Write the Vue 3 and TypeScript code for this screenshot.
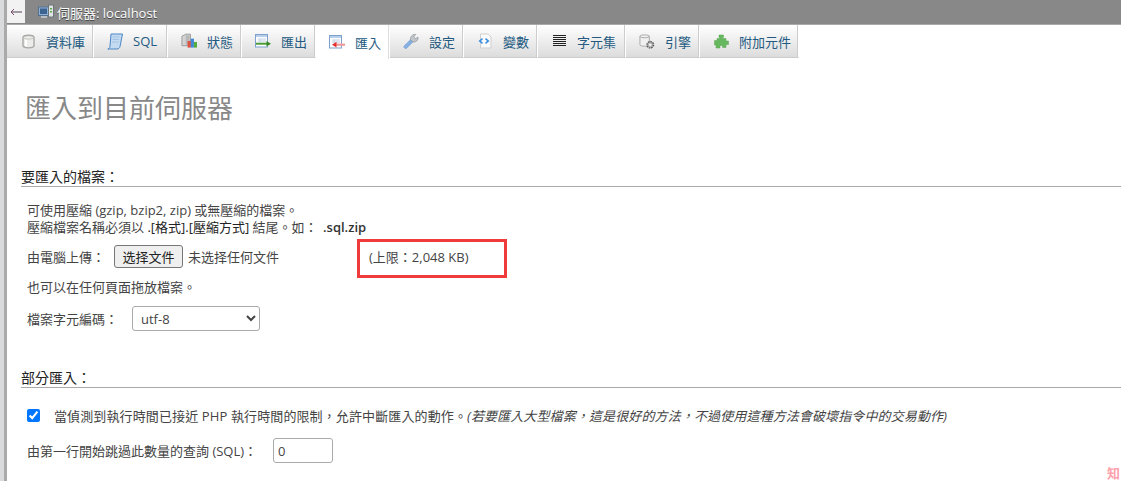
<script setup lang="ts">
const tabs: { key: string; label: string; active?: boolean }[] = [
  { key: 'db', label: '資料庫' },
  { key: 'sql', label: 'SQL' },
  { key: 'status', label: '狀態' },
  { key: 'export', label: '匯出' },
  { key: 'import', label: '匯入', active: true },
  { key: 'settings', label: '設定' },
  { key: 'vars', label: '變數' },
  { key: 'charset', label: '字元集' },
  { key: 'engine', label: '引擎' },
  { key: 'plugin', label: '附加元件' },
]
</script>

<template>
  <div class="page">
    <div class="rail"></div>
    <div class="main">
      <header class="topbar">
        <button class="back" type="button" aria-label="back">
          <svg width="12" height="8" viewBox="0 0 12 8">
            <path d="M12 4H1.5" stroke="#4f444f" fill="none" />
            <path d="M4 1L1 4L4 7" stroke="#7a4a6a" fill="none" />
          </svg>
        </button>
        <svg class="srv" width="16" height="16" viewBox="0 0 16 16">
          <rect x="0.5" y="3" width="10" height="8.5" fill="#8fb0d6" stroke="#55708f" />
          <rect x="2" y="4.5" width="7" height="5.5" fill="#3c6390" />
          <rect x="10.5" y="1" width="5" height="12" fill="#dfe3e6" stroke="#6c7478" />
          <rect x="12" y="4" width="2" height="1.5" fill="#5cae4a" />
          <rect x="12" y="7" width="2" height="1.5" fill="#5cae4a" />
          <rect x="3" y="12" width="6" height="2" fill="#b8bec4" />
        </svg>
        <span class="crumb">伺服器: localhost</span>
      </header>

      <nav class="tabs">
        <a v-for="t in tabs" :key="t.key" class="tab" :class="{ active: t.active }">
          <span class="ico">
            <svg v-if="t.key === 'db'" width="13" height="15" viewBox="0 0 13 15">
              <path d="M1 3.5C1 .4 12 .4 12 3.5V11.5C12 14.6 1 14.6 1 11.5Z" fill="#ececea" stroke="#a8a8a4" stroke-width="1.4" />
              <path d="M1.5 3.5C2 5.6 11 5.6 11.5 3.5" fill="none" stroke="#c4c4c0" />
              <rect x="3" y="6" width="2" height="6.5" fill="#fff" />
            </svg>
            <svg v-else-if="t.key === 'sql'" width="16" height="17" viewBox="0 0 16 17">
              <path d="M4 1H15.5L13 13.5C12.7 15 11.5 16 10 16H.8C2.6 15.5 3 14 3 13Z" fill="#c4daf1" stroke="#4a86c4" />
              <path d="M5.5 4H12.5M5.5 6.5H12M5 9H11.5" stroke="#a3c4e6" fill="none" />
            </svg>
            <svg v-else-if="t.key === 'status'" width="17" height="16" viewBox="0 0 17 16">
              <path d="M1 3L5 .8H10V13H1Z" fill="#d4d4d4" stroke="#979797" />
              <rect x="5" y="2" width="4" height="10" fill="#b8b8b8" />
              <rect x="7" y="8" width="3.4" height="7" fill="#dc5140" />
              <rect x="10.4" y="5.5" width="3.3" height="9.5" fill="#3f86d6" />
              <rect x="13.7" y="9" width="3.3" height="6" fill="#55ad40" />
            </svg>
            <svg v-else-if="t.key === 'export'" width="16" height="14" viewBox="0 0 16 14">
              <rect x="0.5" y="0.5" width="12" height="12.5" fill="#fdfdfd" stroke="#7da0cd" />
              <rect x="1" y="1" width="11" height="2" fill="#b7cfea" />
              <path d="M3 5H11M5 5V8M3 7H11" stroke="#c2d4e8" fill="none" />
              <rect x="1" y="8.7" width="11" height="2" fill="#4c9a3a" />
              <path d="M11.5 7L16 9.7L11.5 12.4Z" fill="#3b8a2a" />
            </svg>
            <svg v-else-if="t.key === 'import'" width="16" height="14" viewBox="0 0 16 14">
              <rect x="0.5" y="0.5" width="12" height="12.5" fill="#fdfdfd" stroke="#7da0cd" />
              <rect x="1" y="1" width="11" height="2" fill="#b7cfea" />
              <path d="M3 5H11M5 5V8M3 7H11" stroke="#c2d4e8" fill="none" />
              <rect x="7" y="8.6" width="9" height="2.2" fill="#f29a9a" />
              <path d="M7.5 6.8L3 9.7L7.5 12.6Z" fill="#e43030" />
            </svg>
            <svg v-else-if="t.key === 'settings'" width="17" height="17" viewBox="0 0 17 17">
              <path d="M1 13.5L8 6.5L10.5 9L3.8 15.8C2.6 16.6 .4 15 1 13.5Z" fill="#86afe4" stroke="#6f97cc" stroke-width="0.6" />
              <path d="M8 6.5C7.5 3 10.5 .5 13.5 1L11.5 3.5L13 5.5L16 4C16.5 7 13.5 9.8 10.5 9Z" fill="#c2c7cc" stroke="#868d94" stroke-width="0.7" />
            </svg>
            <svg v-else-if="t.key === 'vars'" width="16" height="16" viewBox="0 0 16 16">
              <path d="M3.5 1H11L14 4V15H3.5Z" fill="#fafafa" stroke="#cfcfcf" />
              <path d="M5 5L1.5 8L5 11L6 9.8L4 8L6 6.2Z" fill="#3d8fe0" />
              <path d="M9 5L12.5 8L9 11L8 9.8L10 8L8 6.2Z" fill="#3d8fe0" />
            </svg>
            <svg v-else-if="t.key === 'charset'" width="13" height="12" viewBox="0 0 13 12">
              <path d="M0 .5H13M0 2.5H13M0 4.5H13M0 6.5H13M0 8.5H13M0 10.5H13" stroke="#222" fill="none" />
            </svg>
            <svg v-else-if="t.key === 'engine'" width="17" height="17" viewBox="0 0 17 17">
              <path d="M1 3C1 1 11 1 11 3V12C11 14 1 14 1 12Z" fill="#f0f0f0" stroke="#a5a5a5" />
              <path d="M1 3C1 5 11 5 11 3" fill="none" stroke="#a5a5a5" />
              <circle cx="12" cy="12" r="3.4" fill="#bbb" stroke="#5d5d5d" stroke-width="1.7" stroke-dasharray="1.6 1" />
              <circle cx="12" cy="12" r="1.2" fill="#fff" />
            </svg>
            <svg v-else width="15" height="15" viewBox="0 0 15 15">
              <path d="M5 1H9.5V3.5H8.5V4.5H12V7H14.5V10.5H12V13.5H8.5V11.5H6V14H2V11H.5V6.5H3V4.5H6V3.5H5Z" fill="#66b85e" stroke="#5aa653" stroke-width="0.5" />
            </svg>
          </span>
          <span>{{ t.label }}</span>
        </a>
      </nav>

      <main class="content">
        <h2 class="title">匯入到目前伺服器</h2>

        <section class="group first">
          <h3 class="legend">要匯入的檔案：</h3>
          <div class="notes">
            <p>可使用壓縮 (gzip, bzip2, zip) 或無壓縮的檔案。</p>
            <p>壓縮檔案名稱必須以 <span class="dark">.[格式].[壓縮方式]</span> 結尾。如： <b class="strong">.sql.zip</b></p>
          </div>
          <div class="row upload">
            <span class="lab-upload">由電腦上傳：</span>
            <button class="file" type="button">选择文件</button>
            <span class="none">未选择任何文件</span>
            <span class="limit">(上限：2,048 KB)</span>
            <span class="mark"></span>
          </div>
          <p class="drag">也可以在任何頁面拖放檔案。</p>
          <div class="row charset">
            <span class="lab-charset">檔案字元編碼：</span>
            <select class="sel"><option>utf-8</option></select>
          </div>
        </section>

        <section class="group second">
          <h3 class="legend">部分匯入：</h3>
          <div class="row allow">
            <input class="chk" type="checkbox" checked />
            <span class="allow-text">當偵測到執行時間已接近 PHP 執行時間的限制，允許中斷匯入的動作。<i>(若要匯入大型檔案，這是很好的方法，不過使用這種方法會破壞指令中的交易動作)</i></span>
          </div>
          <div class="row skip">
            <span class="lab-skip">由第一行開始跳過此數量的查詢 (SQL)：</span>
            <input class="num" type="text" value="0" />
          </div>
        </section>
      </main>
      <span class="stamp">知</span>
    </div>
  </div>
</template>

<style>
html, body { margin: 0; background: #fff; overflow: hidden; }
</style>

<style scoped>
.page {
  display: flex;
  width: 1121px;
  height: 481px;
  overflow: hidden;
  font-family: "Open Sans", "Noto Sans CJK TC", sans-serif;
  font-size: 13px;
  color: #444;
}
.rail {
  width: 7px;
  flex: none;
  background: linear-gradient(90deg, #d9dbdc 0 4px, #aaa 4px 7px);
}
.main { position: relative; flex: 1; min-width: 0; }
.topbar {
  display: flex;
  align-items: center;
  height: 24px;
  background: #888;
}
.back {
  display: flex;
  align-items: center;
  justify-content: center;
  width: 18px;
  height: 23px;
  margin: 0 13px 1px 0;
  padding: 0;
  border: 0;
  background: #f2f2f2;
}
.srv { flex: none; margin-right: 3px; }
.crumb { color: #fff; text-shadow: 0 1px 0 #444; font-size: 13px; }
.tabs {
  display: grid;
  grid-template-columns: 87px 74px 74px 74px 74px 74px 74px 88px 74px 99px;
  justify-content: start;
  height: 35px;
  border-top: 1px solid #aaa;
  box-sizing: border-box;
  background: #fff;
}
.tab {
  display: flex;
  align-items: center;
  gap: 10px;
  padding-left: 13px;
  box-sizing: border-box;
  height: 33px;
  background: linear-gradient(#fff, #dcdcdc);
  border-right: 1px solid #fff;
  box-shadow: inset -1px 0 0 #ccc;
  border-bottom: 1px solid #ccc;
  color: #235a81;
  font-size: 13px;
  white-space: nowrap;
}
.tab.active { background: #fff; border-bottom: 0; box-shadow: inset -1px 0 0 #ddd; height: 34px; }
.ico { width: 16px; height: 17px; display: flex; align-items: center; justify-content: center; flex: none; }
.content { padding: 0 0 0 14px; }
.title {
  margin: 32px 0 0 4px;
  font-size: 26px;
  font-weight: 400;
  line-height: 34px;
  color: #888;
}
.group { margin: 0; }
.first { margin-top: 43px; }
.second { margin-top: 38px; }
.legend {
  margin: 0;
  height: 18px;
  line-height: 18px;
  font-size: 14px;
  font-weight: 400;
  color: #222;
  border-bottom: 1px solid #aaa;
}
.notes { margin: 15px 0 0 6px; line-height: 17px; }
.notes p { margin: 0; }
.dark { color: #222; }
.strong { margin-left: 2px; font-weight: 600; color: #333; }
.row { display: flex; align-items: center; margin-left: 6px; }
.upload { position: relative; margin-top: 9px; height: 23px; }
.lab-upload { width: 87px; flex: none; }
.file {
  width: 69px;
  height: 23px;
  padding: 0;
  flex: none;
  border: 1px solid #767676;
  border-radius: 3px;
  background: #efefef;
  color: #222;
  font: 13px "Open Sans", "Noto Sans CJK TC", sans-serif;
}
.none { margin-left: 5px; width: 181px; flex: none; }
.limit { white-space: nowrap; }
.mark {
  position: absolute;
  left: 330px;
  top: -6px;
  width: 150px;
  height: 39px;
  box-sizing: border-box;
  border: 3px solid #ef3b3b;
}
.drag { margin: 11px 0 0 6px; line-height: 17px; }
.charset { margin-top: 10px; height: 25px; }
.lab-charset { width: 105px; flex: none; }
.sel {
  width: 128px;
  height: 25px;
  border: 1px solid #aaa;
  border-radius: 3px;
  background: #fff;
  color: #444;
  padding-left: 4px;
  font: 13px "Open Sans", "Noto Sans CJK TC", sans-serif;
}
.allow { margin-top: 19px; height: 17px; white-space: nowrap; }
.allow-text { letter-spacing: 0.12px; }
.chk { width: 13px; height: 13px; margin: 0 14px 0 0; flex: none; }
.allow i { font-style: italic; }
.skip { margin-top: 14px; height: 25px; }
.lab-skip { width: 246px; flex: none; white-space: nowrap; }
.num {
  width: 60px;
  height: 25px;
  box-sizing: border-box;
  padding: 0 4px;
  border: 1px solid #aaa;
  border-radius: 3px;
  color: #444;
  font: 13px "Open Sans", "Noto Sans CJK TC", sans-serif;
}
.stamp {
  position: absolute;
  right: 1px;
  bottom: 1px;
  font: 700 13px/14px "Noto Sans CJK TC", sans-serif;
  color: #ffa0ac;
}
</style>
